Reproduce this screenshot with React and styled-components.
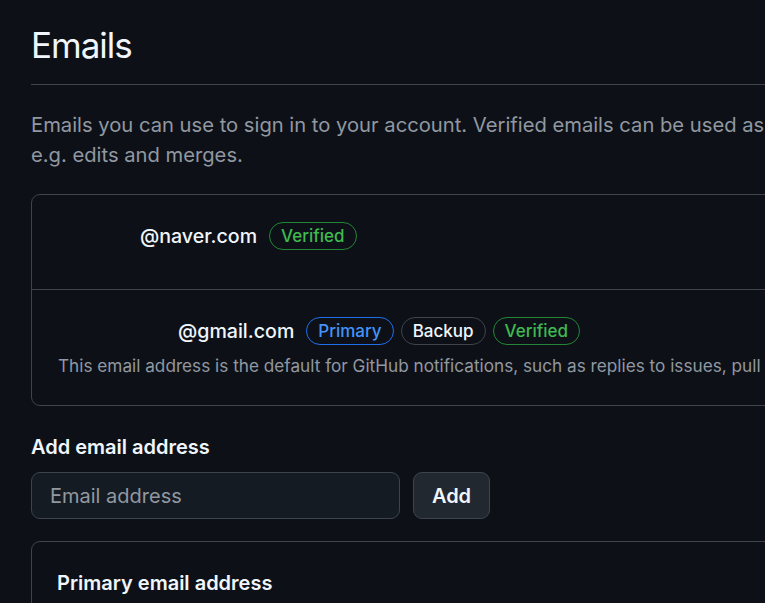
// IMPORTS
import React from 'react';

// STYLES
import styled, { createGlobalStyle } from 'styled-components'

const GlobalStyle = createGlobalStyle`
    html, body {
        margin: 0;
        padding: 0;
        background: #0d1117;
        overflow: hidden;
    }
    body {
        font-family: Inter, "Noto Sans", "Liberation Sans", sans-serif;
        color: #f0f6fc;
    }
`

// STYLED COMPONENTS
const StyledPage = styled.div`
    width: 1000px;
    padding: 20px 0 0 31px;
    box-sizing: border-box;
`

const Header = styled.div`
    padding-bottom: 13px;
    border-bottom: 1px solid #3d444d;
`

const Title = styled.h2`
    margin: 0;
    font-size: 35px;
    font-weight: 400;
    letter-spacing: -1px;
    line-height: 51px;
    color: #f0f6fc;
`

const Note = styled.p`
    margin: 25px 0 0;
    font-size: 20.2px;
    line-height: 30px;
    color: #9198a1;
    white-space: nowrap;
`

const EmailList = styled.div`
    margin-top: 24px;
    border: 1px solid #3d444d;
    border-radius: 9px;
`

const EmailRow = styled.div`
    display: flex;
    flex-direction: column;
    box-sizing: border-box;
    height: ${props => props.height}px;
    padding: 27px 26px 0;

    & + & {
        border-top: 1px solid #3d444d;
    }
`

const EmailLine = styled.div`
    display: flex;
    align-items: center;
    height: 28px;
`

const Address = styled.span`
    font-size: 19.6px;
    font-weight: 500;
    color: #f0f6fc;
    margin-right: 12px;
    padding-left: ${props => props.hidden_width}px;
`

const Badges = styled.div`
    display: flex;
    gap: 7px;
`

const badgeColors = {
    green: { fg: '#3fb950', border: '#238636' },
    blue: { fg: '#4493f8', border: '#1f6feb' },
    plain: { fg: '#f0f6fc', border: '#3d444d' },
}

const Badge = styled.span`
    display: inline-flex;
    align-items: center;
    height: 28px;
    box-sizing: border-box;
    padding: 0 11px;
    border-radius: 999px;
    border: 1px solid ${props => badgeColors[props.tone].border};
    color: ${props => badgeColors[props.tone].fg};
    font-size: 17px;
    font-weight: 500;
`

const Description = styled.div`
    margin-top: 8px;
    font-size: 17.2px;
    line-height: 25px;
    color: #9198a1;
    white-space: nowrap;
`

const SubHeading = styled.h3`
    margin: 26px 0 0;
    font-size: 20px;
    font-weight: 600;
    line-height: 30px;
    color: #f0f6fc;
`

const AddForm = styled.form`
    display: flex;
    align-items: center;
    gap: 13px;
    margin-top: 10px;
`

const EmailInput = styled.input`
    width: 369px;
    height: 47px;
    box-sizing: border-box;
    padding: 0 18px;
    background: #151b23;
    border: 1px solid #3d444d;
    border-radius: 9px;
    font-family: inherit;
    font-size: 20px;
    color: #f0f6fc;
    outline: none;

    &::placeholder {
        color: #9198a1;
    }
`

const AddButton = styled.button`
    width: 77px;
    height: 47px;
    box-sizing: border-box;
    background: #212830;
    border: 1px solid #3d444d;
    border-radius: 9px;
    font-family: inherit;
    font-size: 20px;
    font-weight: 600;
    color: #f0f6fc;
`

const PrimaryBox = styled.div`
    margin-top: 22px;
    border: 1px solid #3d444d;
    border-radius: 9px;
    padding: 26px 25px 40px;
`

const BoxTitle = styled.div`
    font-size: 20px;
    font-weight: 600;
    line-height: 30px;
    color: #f0f6fc;
`

// STATE
const emails = [
    { domain: '@naver.com', hidden: 82, height: 94, badges: [{ label: 'Verified', tone: 'green' }] },
    { domain: '@gmail.com', hidden: 120, height: 116,
        badges: [
            { label: 'Primary', tone: 'blue' },
            { label: 'Backup', tone: 'plain' },
            { label: 'Verified', tone: 'green' },
        ],
        description: 'This email address is the default for GitHub notifications, such as replies to issues, pull requests, etc.',
    },
]

// __MAIN FUNCTIONAL COMPONENT__
function App() {
    return (
        <StyledPage>
            <GlobalStyle />
            <Header>
                <Title>Emails</Title>
            </Header>
            <Note>
                Emails you can use to sign in to your account. Verified emails can be used as the author or committer addresses for web-based Git operations,
                <br />
                e.g. edits and merges.
            </Note>

            <EmailList>
                {emails.map((item, index) => (
                    <EmailRow key={index} height={item.height}>
                        <EmailLine>
                            <Address hidden_width={item.hidden}>{item.domain}</Address>
                            <Badges>
                                {item.badges.map(b => <Badge key={b.label} tone={b.tone}>{b.label}</Badge>)}
                            </Badges>
                        </EmailLine>
                        {item.description ? <Description>{item.description}</Description> : null}
                    </EmailRow>
                ))}
            </EmailList>

            <SubHeading>Add email address</SubHeading>
            <AddForm onSubmit={e => e.preventDefault()}>
                <EmailInput type="email" placeholder="Email address" />
                <AddButton type="submit">Add</AddButton>
            </AddForm>

            <PrimaryBox>
                <BoxTitle>Primary email address</BoxTitle>
            </PrimaryBox>
        </StyledPage>
    )
}

// EXPORTS
export default App;
